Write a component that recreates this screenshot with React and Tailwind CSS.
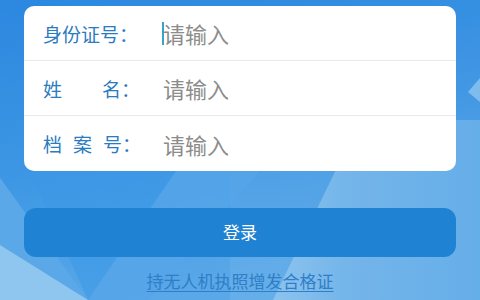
import React from "react";

function Background() {
  return (
    <svg className="absolute inset-0 w-full h-full" viewBox="0 0 480 300" preserveAspectRatio="none">
      <defs>
        <linearGradient id="bg" x1="0" y1="0" x2="0.3" y2="1">
          <stop offset="0" stopColor="#2c87df" />
          <stop offset="0.55" stopColor="#3d97e4" />
          <stop offset="1" stopColor="#5aa8e8" />
        </linearGradient>
        <linearGradient id="rt" x1="0" y1="0" x2="0" y2="1">
          <stop offset="0" stopColor="#3a90e2" />
          <stop offset="1" stopColor="#6db3ea" />
        </linearGradient>
        <linearGradient id="wedge" x1="0" y1="0" x2="1" y2="0">
          <stop offset="0" stopColor="#8cc3ee" />
          <stop offset="0.35" stopColor="#74b5ea" />
          <stop offset="1" stopColor="#66aee9" />
        </linearGradient>
        <linearGradient id="v" x1="0" y1="0" x2="0" y2="1">
          <stop offset="0" stopColor="#3b96e4" />
          <stop offset="1" stopColor="#3d9ae8" />
        </linearGradient>
      </defs>
      <rect x="0" y="0" width="480" height="300" fill="url(#bg)" />
      <polygon points="230,40 480,20 480,300 230,300" fill="url(#rt)" opacity="0.6" />
      <polygon points="0,120 -20,150 88,300 0,300" fill="#5ba8e8" />
      <polygon points="0,245 88,300 0,300" fill="#8fc6ef" />
      <polygon points="190,150 260,170 150,300 88,300" fill="#56a5e8" opacity="0.8" />
      <polygon points="20,150 190,150 88,300" fill="url(#v)" opacity="0.6" />
      <polygon points="360,120 480,120 480,300 273,300" fill="url(#wedge)" />
      <polygon points="480,78 468,92 480,102" fill="#7fbcee" />
    </svg>
  );
}

function Row({ children, last }) {
  return (
    <div
      className={
        "flex items-center h-[55px] pl-[19px] " + (last ? "" : "border-b border-[#e8e9ec]")
      }
    >
      {children}
    </div>
  );
}

export default function App() {
  return (
    <div
      className="relative w-[480px] h-[300px] overflow-hidden"
      style={{ fontFamily: '"Noto Sans CJK SC", "Noto Sans", sans-serif' }}
    >
      <Background />
      <div className="relative flex flex-col px-[24px] pt-[6px]">
        <div className="bg-white rounded-[10px] flex flex-col">
          <Row>
            <div className="w-[120px] text-[19px] text-[#2a7bbf] leading-none">身份证号：</div>
            <div className="flex items-center">
              <span className="inline-block w-[2px] h-[23px] bg-[#3aa2c9] -ml-[1px] mr-[-1px]"></span>
              <span className="text-[22px] text-[#8c8c8c] leading-none">请输入</span>
            </div>
          </Row>
          <Row>
            <div className="w-[120px] flex text-[19px] text-[#2a7bbf] leading-none">
              <span>姓</span>
              <span className="ml-[40px]">名：</span>
            </div>
            <span className="text-[22px] text-[#8c8c8c] leading-none">请输入</span>
          </Row>
          <Row last>
            <div className="w-[120px] flex text-[19px] text-[#2a7bbf] leading-none">
              <span>档</span>
              <span className="ml-[11px]">案</span>
              <span className="ml-[11px]">号：</span>
            </div>
            <span className="text-[22px] text-[#8c8c8c] leading-none">请输入</span>
          </Row>
        </div>
        <button className="mt-[37px] h-[49px] rounded-[12px] bg-[#1f82d3] text-white text-[17px] leading-none pb-[2px] flex items-center justify-center">
          登录
        </button>
        <div className="mt-[12px] flex justify-center">
          <span className="text-[17px] leading-[24px] text-[#2f7ec6] underline underline-offset-[3px]">
            持无人机执照增发合格证
          </span>
        </div>
      </div>
    </div>
  );
}
